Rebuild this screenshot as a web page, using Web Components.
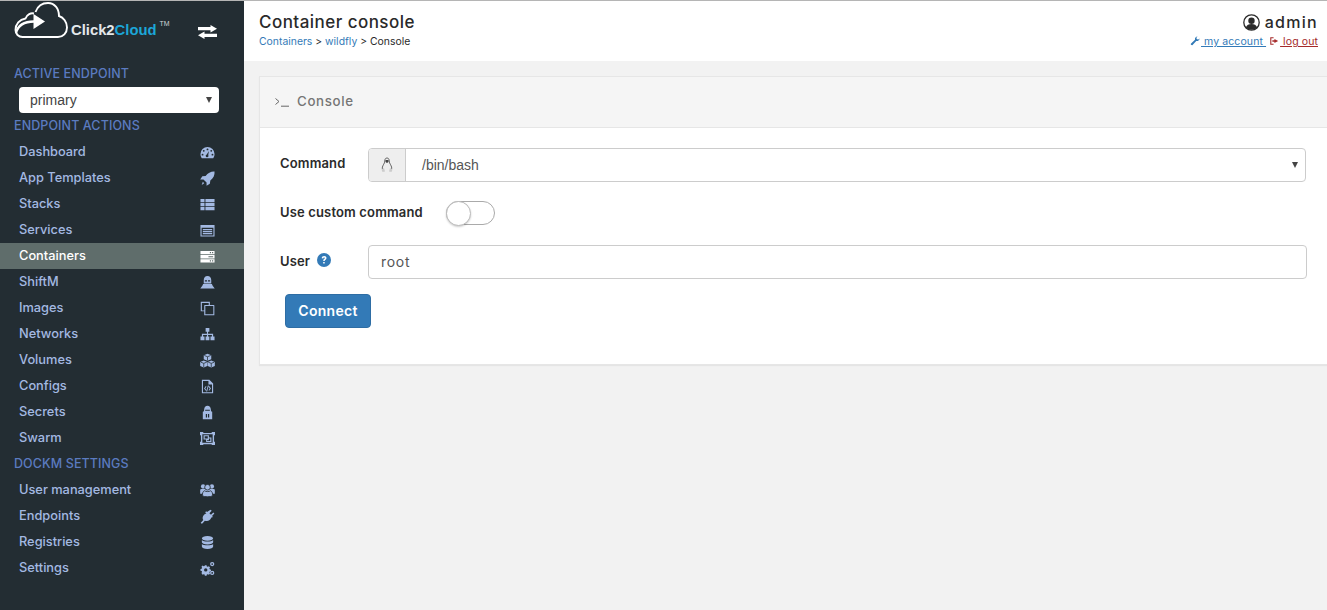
<!DOCTYPE html>
<html>
<head>
<meta charset="utf-8">
<title>Container console</title>
<style>
  html, body { margin: 0; height: 100%; overflow: hidden; }
  body { font-family: Inter, "Open Sans", sans-serif; background: #f2f2f2; }
</style>
</head>
<body>
<c2c-app>
  <c2c-sidebar slot="sidebar">
    <c2c-heading>ACTIVE ENDPOINT</c2c-heading>
    <c2c-select compact>primary</c2c-select>
    <c2c-heading>ENDPOINT ACTIONS</c2c-heading>
    <c2c-nav-item icon="dashboard">Dashboard</c2c-nav-item>
    <c2c-nav-item icon="rocket">App Templates</c2c-nav-item>
    <c2c-nav-item icon="thlist">Stacks</c2c-nav-item>
    <c2c-nav-item icon="listalt">Services</c2c-nav-item>
    <c2c-nav-item icon="server" active>Containers</c2c-nav-item>
    <c2c-nav-item icon="ship">ShiftM</c2c-nav-item>
    <c2c-nav-item icon="clone">Images</c2c-nav-item>
    <c2c-nav-item icon="sitemap">Networks</c2c-nav-item>
    <c2c-nav-item icon="cubes">Volumes</c2c-nav-item>
    <c2c-nav-item icon="filecode">Configs</c2c-nav-item>
    <c2c-nav-item icon="secret">Secrets</c2c-nav-item>
    <c2c-nav-item icon="objectgroup">Swarm</c2c-nav-item>
    <c2c-heading>DOCKM SETTINGS</c2c-heading>
    <c2c-nav-item icon="users">User management</c2c-nav-item>
    <c2c-nav-item icon="plug">Endpoints</c2c-nav-item>
    <c2c-nav-item icon="database">Registries</c2c-nav-item>
    <c2c-nav-item icon="cogs">Settings</c2c-nav-item>
  </c2c-sidebar>
  <c2c-header slot="header"></c2c-header>
  <c2c-panel title-text="Console">
    <c2c-form-row label="Command" class="command-row">
      <c2c-select addon>/bin/bash</c2c-select>
    </c2c-form-row>
    <c2c-form-row label="Use custom command" class="switch-row">
      <c2c-toggle></c2c-toggle>
    </c2c-form-row>
    <c2c-form-row label="User" help>
      <c2c-text-field>root</c2c-text-field>
    </c2c-form-row>
    <c2c-button>Connect</c2c-button>
  </c2c-panel>
</c2c-app>

<script>
/* ------------- ICONS ------------ */
// drawn on a 16x16 box, filled with the text colour
const icons = {
  dashboard: `<path fill-rule="evenodd" d="M8 2a7.500 7.500 0 0 1 7.500 7.500c0 1.700-.5 3.100-1.400 4.500H1.900C1 12.600.5 11.200.5 9.500A7.500 7.500 0 0 1 8 2zM8 3.700a1 1 0 1 0 0 2 1 1 0 0 0 0-2zM4 5.200a1 1 0 1 0 0 2 1 1 0 0 0 0-2zM12 5.200a1 1 0 1 0 0 2 1 1 0 0 0 0-2zM2.700 9.300a1 1 0 1 0 0 2 1 1 0 0 0 0-2zM13.300 9.300a1 1 0 1 0 0 2 1 1 0 0 0 0-2zM9.500 6.300L7.200 10a1.500 1.500 0 1 0 1.600.6z"/>`,
  rocket: `<path d="M15.500.500c.3 3.800-1 7-4.500 9.500l-.5 3.500L7 15.800V12.300L3.700 9H.2l2.300-3.300L6 5.300C8.500 1.800 12 .2 15.500.500z"/><path d="M3 11.500l1.500 1.500L1.800 15z"/>`,
  thlist: `<path d="M.5 2h4.300v3.500H.5zM5.800 2h9.700v3.500H5.800zM.5 6.300h4.300v3.500H.5zM5.800 6.300h9.700v3.500H5.800zM.5 10.600h4.300v3.500H.5zM5.800 10.600h9.700v3.500H5.800z"/>`,
  listalt: `<path fill-rule="evenodd" d="M.5 2h15v12.500H.5zM1.700 5v8.300h12.600V5z"/><path d="M3 6.500h10v1.200H3zM3 8.600h10v1.200H3zM3 10.700h10v1.200H3z"/>`,
  server: `<path fill-rule="evenodd" d="M.5 2h15v3.600H.5zM10.500 3.200v1.200h1.300V3.200zM12.800 3.200v1.200h1.300V3.200zM.5 6.400h15V10H.5zM9 7.600v1.200h5V7.600zM.5 10.800h15v3.600H.5zM10.500 12v1.200h1.300V12zM12.800 12v1.200h1.300V12z"/>`,
  ship: `<path fill-rule="evenodd" d="M8 1c2.700 0 4 1.800 4 4.500V9H4V5.500C4 2.800 5.300 1 8 1zM5.200 5.500V7h2.300V5.500zM8.500 5.500V7h2.300V5.500z"/><path d="M3.300 9.500h9.400l.8 2 2.200 3H.3l2.200-3z"/>`,
  clone: `<path fill-rule="evenodd" d="M.8.800h9.700v3.400h4.200a.6.600 0 0 1 .6.600v10.400H4.500v-4.200H.8zM2 2v8h2.500V4.800a.6.600 0 0 1 .6-.6h4.200V2zM5.700 5.400v8.600h8.500V5.400z"/>`,
  sitemap: `<path d="M6 1h4v4H8.600v2.200h5.400V10h1.500v4h-4.300v-4h1.500V8.500H8.600V10H10v4H6v-4h1.400V8.500H3.300V10h1.500v4H.5v-4H2V7.200h5.400V5H6z"/>`,
  cubes: `<path d="M8 .8l4 1.500v4.300L8 8.200 4 6.600V2.300zM4 8l3.800 1.500v4.300L4 15.400.2 13.800V9.500zM12 8l3.800 1.500v4.300L12 15.400l-3.800-1.600V9.500z"/><path fill="none" stroke="#232d33" stroke-width=".8" d="M4.500 2.600L8 4l3.500-1.400M8 4v4M.8 9.800L4 11l3.200-1.200M4 11v4M8.800 9.800L12 11l3.200-1.200M12 11v4"/>`,
  filecode: `<path fill-rule="evenodd" d="M2 .8h8l4 4v10.400H2zM3.200 2v12h9.600V5.800H9V2z"/><path d="M6.200 7.500L4.300 10l1.900 2.500.7-.6L5.600 10l1.300-1.900zM9.800 7.500l1.900 2.500-1.900 2.500-.7-.6 1.300-1.900-1.300-1.900zM8.400 6.800h1L7.600 13.200h-1z"/>`,
  secret: `<path fill-rule="evenodd" d="M8 .8c2.200 0 3.300 1.500 3.500 3.500l.3 2.400 1.200.5v8H3V7.200l1.200-.5.3-2.400C4.700 2.300 5.800.8 8 .8zM5.500 5v1.200h5V5zM6.200 9.500v3.700h1.300V9.500zM8.500 9.500v3.700h1.300V9.500z"/>`,
  objectgroup: `<path fill-rule="evenodd" d="M0 1h3.500v1h9V1H16v3.500h-1v7h1V15h-3.500v-1h-9v1H0v-3.500h1v-7H0zM2.500 3.500v9h11v-9z"/><path fill-rule="evenodd" d="M3.800 4.500h5.700V7h2.700v4.700H6.500V9H3.800zM5 5.700V8h3.300V5.700zM9.500 8v1.800h-2v.8h3.500V8z"/>`,
  users: `<circle cx="3.300" cy="3.600" r="2.300"/><circle cx="12.700" cy="3.600" r="2.300"/><path d="M.2 7c.8-.8 2-1 3.100-1h9.400c1.100 0 2.300.2 3.100 1v4.500H.2z"/><circle cx="8" cy="4.500" r="3" stroke="#232d33" stroke-width=".9"/><path d="M4.700 8.300c1.700 1.100 4.900 1.100 6.600 0 1.700.7 2.200 2.700 2.200 5.300-1.600 1.400-9.400 1.400-11 0 0-2.600.5-4.600 2.200-5.300z" stroke="#232d33" stroke-width=".9"/>`,
  plug: `<path d="M11.200.8l1.300 1.100L10 4.400l1.700 1.700 2.500-2.500 1.100 1.300-2.500 2.500.9.900-1.100 1.100-.5-.5c-.8 2.700-2.700 4-4.700 4-.9 0-1.600-.1-2.200-.5L2.500 15.500H1.200L.8 14.700l2.700-2.900c-1-1.600-.9-3.800.6-5.500.7-.7 1.500-1.200 2.700-1.400L5.500 3.500l1.100-1 .9.800z"/>`,
  database: `<path d="M8 1c3.500 0 6 1 6 2.500S11.500 6 8 6 2 5 2 3.500 4.500 1 8 1zM2 5.300C3 6.400 5.300 7 8 7s5-.6 6-1.700v2.400C14 9 11.500 10 8 10S2 9 2 7.700zM2 9.500C3 10.600 5.300 11 8 11s5-.4 6-1.500v2.800c0 1.400-2.500 2.500-6 2.500s-6-1.100-6-2.500z"/>`,
  cogs: `<path fill-rule="evenodd" d="M5.200 4.500h1.800l.3 1.300 1 .4 1.200-.7 1.200 1.300-.7 1.100.4 1 1.300.3v1.800l-1.300.3-.4 1 .7 1.100-1.200 1.300-1.200-.7-1 .4-.3 1.300H5.200l-.3-1.300-1-.4-1.200.7L1.500 12.800l.7-1.100-.4-1L.5 10.400V8.600l1.300-.3.4-1-.7-1.100 1.200-1.300 1.200.7 1-.4zM6.100 7.700a1.800 1.800 0 1 0 0 3.600 1.800 1.800 0 0 0 0-3.600z"/><path fill-rule="evenodd" d="M13 1a2.300 2.300 0 1 1 0 4.600A2.300 2.300 0 0 1 13 1zm0 1.400a.9.900 0 1 0 0 1.800.9.900 0 0 0 0-1.800zM13 10.400a2.300 2.300 0 1 1 0 4.600 2.300 2.300 0 0 1 0-4.600zm0 1.400a.9.900 0 1 0 0 1.800.9.900 0 0 0 0-1.800z"/>`
};

/* ------------- APP SHELL ------------ */
class App extends HTMLElement {
  constructor() {
    super();
    this.attachShadow({ mode: "open" }).innerHTML = /*html*/`
      <style>
        :host { display: grid; grid-template-columns: 244px 1fr; grid-template-rows: 61px 1fr; height: 610px; border-top: 1px solid #b5b5b5; box-sizing: border-box; }
        ::slotted([slot="sidebar"]) { grid-row: 1 / 3; }
        main { padding: 14px 0 0 15px; min-width: 0; }
      </style>
      <slot name="sidebar"></slot>
      <slot name="header"></slot>
      <main><slot></slot></main>
    `;
  }
}

/* ------------- SIDEBAR ------------ */
class Sidebar extends HTMLElement {
  constructor() {
    super();
    this.attachShadow({ mode: "open" }).innerHTML = /*html*/`
      <style>
        :host { display: block; background: #232d33; color: #a3b9e2; }
        .brand { display: flex; align-items: flex-start; height: 60px; padding: 1px 0 0 14px; box-sizing: border-box; }
        .logo { width: 54px; height: 36px; flex: none; }
        .name { font: bold 14.800px/1 "Liberation Sans", Arial, sans-serif; color: #e4e8ea; margin: 21px 0 0 3px; }
        .name span { color: #1ca6d8; }
        .tm { font: 7px/1 "Liberation Sans", Arial, sans-serif; color: #cfd4d6; margin: 18px 0 0 3px; }
        .switch { width: 19px; height: 14px; margin: 23px 0 0 28px; flex: none; color: #fff; }
      </style>
      <div class="brand">
        <svg class="logo" viewBox="14 2 54 36" fill="none" stroke="#fff" stroke-width="1.900">
          <path d="M34 13.500C31 12.500 27 14.500 25.500 18.500 19.500 19.500 15.500 24 15.500 30c0 4 3 7 7 7H58c5 0 9-4 9-9.500 0-5.500-3.500-10-8-11.500C59 8.500 54.500 3 48 3 42 3 37.500 6.500 35.500 12"/>
          <path d="M16 33C18 25 25 21.500 34 21.500" stroke-width="2.300"/>
          <path d="M33.500 14L45 21.500 33.500 29z" fill="#fff" stroke="none"/>
        </svg>
        <span class="name">Click2<span>Cloud</span></span>
        <span class="tm">TM</span>
        <svg class="switch" viewBox="0 0 19 14" fill="currentColor"><path d="M0 2h12.500V0L19 3.700l-6.500 3.700V5.200H0zM19 8.800H6.500V6.600L0 10.300 6.500 14v-2H19z"/></svg>
      </div>
      <slot></slot>
    `;
  }
}

class Heading extends HTMLElement {
  constructor() {
    super();
    this.attachShadow({ mode: "open" }).innerHTML = /*html*/`
      <style>
        :host { display: block; height: 26px; line-height: 26px; padding-left: 14px; font-size: 12.500px; font-weight: 500; letter-spacing: .1px; color: #5b7bc0; white-space: nowrap; }
      </style>
      <slot></slot>
    `;
  }
}

class NavItem extends HTMLElement {
  constructor() {
    super();
    this.attachShadow({ mode: "open" }).innerHTML = /*html*/`
      <style>
        :host { display: flex; align-items: center; justify-content: space-between; height: 26px; padding: 0 29px 0 19px; font-size: 12.800px; font-weight: 500; color: #a3b9e2; }
        :host([active]) { background: #5f6d6b; color: #fff; }
        span { padding-bottom: 2px; }
        svg { width: 15px; height: 15px; fill: currentColor; }
      </style>
      <span><slot></slot></span>
      <svg viewBox="0 0 16 16">${icons[this.getAttribute("icon")] || ""}</svg>
    `;
  }
}

/* ------------- HEADER ------------ */
class Header extends HTMLElement {
  constructor() {
    super();
    this.attachShadow({ mode: "open" }).innerHTML = /*html*/`
      <style>
        :host { display: flex; justify-content: space-between; background: #fff; color: #2a2a2a; height: 60px; padding: 0 9px 0 15px; }
        h1 { margin: 11px 0 0; font-size: 17px; line-height: 20px; font-weight: 500; letter-spacing: .46px; }
        .crumbs { font-size: 10.400px; line-height: 14px; margin-top: 3px; }
        a { color: #337ab7; text-decoration: none; }
        .right { text-align: right; }
        .user { display: flex; align-items: center; justify-content: flex-end; gap: 5px; margin-top: 11px; font-size: 16px; line-height: 20px; font-weight: 500; letter-spacing: 1.300px; }
        .user svg { width: 17px; height: 17px; }
        .links { font-size: 10.500px; line-height: 14px; margin-top: 3px; letter-spacing: .1px; }
        .links a { text-decoration: underline; }
        .links a.out { color: #a52a2a; }
        .links svg { width: 10px; height: 10px; vertical-align: -1px; fill: currentColor; }
        .links svg + a { margin-left: 1px; }
      </style>
      <div>
        <h1>Container console</h1>
        <div class="crumbs"><a>Containers</a> &gt; <a>wildfly</a> &gt; Console</div>
      </div>
      <div class="right">
        <div class="user">
          <svg viewBox="0 0 17 17"><circle cx="8.500" cy="8.500" r="7.700" fill="none" stroke="#2a2a2a" stroke-width="1.300"/><circle cx="8.500" cy="6.800" r="3.200" fill="#2a2a2a"/><path d="M2.800 13.500c.8-2.500 3-3.500 5.700-3.500s4.900 1 5.700 3.500c-3 3-8.400 3-11.400 0z" fill="#2a2a2a"/></svg>
          <span>admin</span>
        </div>
        <div class="links">
          <svg viewBox="0 0 12 12" style="color:#337ab7"><path d="M11.500 3c0 2-2 3.500-4 3L2.800 11c-.6.600-2.400-1-1.800-1.700L6 4.500C5.500 2.500 7 .5 9 .5L7.500 2.500 8.500 4l1.500.3z"/></svg><a> my account </a>
          <svg viewBox="0 0 12 12" style="color:#a52a2a;margin-left:3px"><path d="M1.500 1.500h4v1.300H2.800v6.400h2.700v1.300h-4zM6.500 3.500L11 6l-4.500 2.500V7H4V5h2.500z"/></svg><a class="out"> log out</a>
        </div>
      </div>
    `;
  }
}

/* ------------- PANEL ------------ */
class Panel extends HTMLElement {
  constructor() {
    super();
    this.attachShadow({ mode: "open" }).innerHTML = /*html*/`
      <style>
        :host { display: block; background: #fff; border: 1px solid #e6e6e6; border-right: 0; box-shadow: 0 1px 1px rgba(0,0,0,.05); }
        header { display: flex; align-items: center; height: 50px; padding-left: 15px; background: #f5f5f5; border-bottom: 1px solid #e6e6e6; color: #767676; font-size: 13.300px; font-weight: 500; letter-spacing: .65px; }
        header svg { width: 14px; height: 10px; margin-right: 8px; }
        header span { padding-bottom: 2px; }
        .body { padding: 20px 20px 36px 20px; }
      </style>
      <header>
        <svg viewBox="0 0 14 10" fill="none" stroke="#666" stroke-width="1"><path d="M.5 1.500L4 4.500.5 7.500M6 9.200h8"/></svg>
        <span>${this.getAttribute("title-text")}</span>
      </header>
      <div class="body"><slot></slot></div>
    `;
  }
}

class FormRow extends HTMLElement {
  constructor() {
    super();
    const help = this.hasAttribute("help") ? /*html*/`
      <svg viewBox="0 0 14 14"><circle cx="7" cy="7" r="7" fill="#337ab7"/><path d="M4.700 5.300C4.800 3.800 5.800 3 7.200 3c1.300 0 2.300.8 2.300 2 0 1.800-1.800 1.800-1.800 3H6.200c0-2 1.700-2 1.700-2.900 0-.4-.3-.7-.8-.7s-.8.3-.9 1zM6.200 8.900h1.500v1.600H6.200z" fill="#fff"/></svg>` : "";
    this.attachShadow({ mode: "open" }).innerHTML = /*html*/`
      <style>
        :host { display: grid; grid-template-columns: 88px 1fr; align-items: center; margin-bottom: 15px; }
        :host(.command-row) { margin-bottom: 19px; }
        :host(.switch-row) { grid-template-columns: 166px 1fr; margin-bottom: 20px; }
        label { display: flex; align-items: center; gap: 8px; padding-bottom: 2px; font-size: 13px; font-weight: 600; letter-spacing: .15px; color: #2b2b2b; white-space: nowrap; }
        :host(.command-row) label { padding-bottom: 4px; }
        svg { width: 14px; height: 14px; margin: -2px 0 0 -1px; }
      </style>
      <label>${this.getAttribute("label")}${help}</label>
      <div><slot></slot></div>
    `;
  }
}

/* ------------- CONTROLS ------------ */
class Select extends HTMLElement {
  constructor() {
    super();
    const addon = this.hasAttribute("addon") ? /*html*/`
      <span class="addon"><svg viewBox="0 0 14 16"><path fill="none" stroke="#666" d="M7 1c-1.700 0-2.200 1.300-2.200 3 0 1.500-.6 2.300-1.400 3.800-.8 1.500-1.400 3-1 4.200M7 1c1.700 0 2.200 1.300 2.200 3 0 1.500.6 2.300 1.400 3.800.8 1.500 1.400 3 1 4.200"/><path fill="#444" d="M5.500 3h3v2l-1.500 1-1.500-1z"/><path fill="#ccc" d="M1.500 12.500L4 11l1 3.500-2.500.5zM12.500 12.500L10 11l-1 3.500 2.500.5z"/></svg></span>` : "";
    this.attachShadow({ mode: "open" }).innerHTML = /*html*/`
      <style>
        :host { display: flex; align-items: stretch; box-sizing: border-box; height: 34px; margin-right: 1px; background: #fff; border: 1px solid #ccc; border-radius: 4px; font: 14px "Liberation Sans", Arial, sans-serif; color: #555; }
        :host([compact]) { height: 26px; margin: 0 25px 0 19px; border: 0; color: #444; }
        .addon { display: flex; align-items: center; justify-content: center; width: 36px; flex: none; background: #eee; border-right: 1px solid #ccc; border-radius: 3px 0 0 3px; }
        .addon svg { width: 14px; height: 16px; }
        .value { flex: 1; display: flex; align-items: center; padding-left: 16px; }
        :host([compact]) .value { padding-left: 11px; }
        .caret { align-self: center; width: 0; height: 0; margin-right: 7px; border: 3.500px solid transparent; border-top: 6px solid #444; border-bottom: 0; }
      </style>
      ${addon}
      <span class="value"><slot></slot></span>
      <span class="caret"></span>
    `;
  }
}

class Toggle extends HTMLElement {
  constructor() {
    super();
    this.attachShadow({ mode: "open" }).innerHTML = /*html*/`
      <style>
        :host { display: flex; align-items: center; box-sizing: border-box; width: 49px; height: 24px; background: #fff; border: 1px solid #aaa; border-radius: 12px; }
        span { width: 25px; height: 25px; margin-left: -1px; box-sizing: border-box; background: #fff; border: 1px solid #bbb; border-radius: 50%; box-shadow: 0 1px 2px rgba(0,0,0,.2); }
      </style>
      <span></span>
    `;
  }
}

class TextField extends HTMLElement {
  constructor() {
    super();
    this.attachShadow({ mode: "open" }).innerHTML = /*html*/`
      <style>
        :host { display: flex; align-items: center; box-sizing: border-box; height: 34px; padding: 0 0 2px 12px; background: #fff; border: 1px solid #ccc; border-radius: 4px; font-size: 14px; font-weight: 400; letter-spacing: .7px; color: #555; }
      </style>
      <slot></slot>
    `;
  }
}

class Button extends HTMLElement {
  constructor() {
    super();
    this.attachShadow({ mode: "open" }).innerHTML = /*html*/`
      <style>
        :host { display: flex; align-items: center; justify-content: center; box-sizing: border-box; width: 86px; height: 34px; margin-left: 5px; background: #337ab7; border: 1px solid #2e6da4; border-radius: 4px; color: #fff; font-size: 14px; font-weight: 600; letter-spacing: .3px; }
        span { padding-bottom: 2px; }
      </style>
      <span><slot></slot></span>
    `;
  }
}

/* -------- DEFINITIONS -------- */
customElements.define("c2c-app", App);
customElements.define("c2c-sidebar", Sidebar);
customElements.define("c2c-heading", Heading);
customElements.define("c2c-nav-item", NavItem);
customElements.define("c2c-header", Header);
customElements.define("c2c-panel", Panel);
customElements.define("c2c-form-row", FormRow);
customElements.define("c2c-select", Select);
customElements.define("c2c-toggle", Toggle);
customElements.define("c2c-text-field", TextField);
customElements.define("c2c-button", Button);
</script>
</body>
</html>
